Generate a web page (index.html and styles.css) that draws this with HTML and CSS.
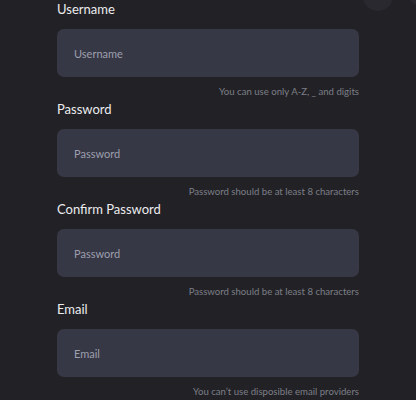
FILE: index.html
```html
<!DOCTYPE html>
<html lang="en">
<head>
<meta charset="utf-8">
<title>Sign up</title>
<link rel="stylesheet" href="styles.css">
</head>
<body>
<div class="decor" aria-hidden="true">
  <div class="deco deco-a"></div>
  <div class="deco deco-b"></div>
</div>
<form class="form">
  <div class="field">
    <label class="label">Username</label>
    <input class="input" type="text" placeholder="Username">
    <div class="hint">You can use only A-Z, _ and digits</div>
  </div>
  <div class="field">
    <label class="label">Password</label>
    <input class="input" type="password" placeholder="Password">
    <div class="hint">Password should be at least 8 characters</div>
  </div>
  <div class="field">
    <label class="label">Confirm Password</label>
    <input class="input" type="password" placeholder="Password">
    <div class="hint">Password should be at least 8 characters</div>
  </div>
  <div class="field">
    <label class="label">Email</label>
    <input class="input" type="email" placeholder="Email">
    <div class="hint">You can’t use disposible email providers</div>
  </div>
</form>
</body>
</html>
```

FILE: styles.css
```css
html, body {
  margin: 0;
  padding: 0;
  background: #222226;
  height: 100%;
  overflow: hidden;
}
body {
  font-family: Lato, "Noto Sans", sans-serif;
  position: relative;
}
.decor {
  position: absolute;
  inset: 0;
  overflow: hidden;
  pointer-events: none;
}
.deco {
  position: absolute;
  border-radius: 50%;
  background: #29292f;
}
.deco-a {
  width: 30px;
  height: 30px;
  left: 363px;
  top: -19px;
}
.deco-b {
  width: 30px;
  height: 30px;
  left: 408px;
  top: -23px;
}
.form {
  position: relative;
  display: flex;
  flex-direction: column;
  width: 302px;
  margin-left: 57px;
}
.field {
  display: flex;
  flex-direction: column;
  margin-bottom: 2px;
}
.label {
  font-size: 13px;
  line-height: 18px;
  color: #ececee;
  margin-bottom: 11px;
}
.input {
  box-sizing: border-box;
  height: 48px;
  width: 100%;
  border: none;
  outline: none;
  border-radius: 7px;
  background: #373845;
  padding: 0 17px;
  font-family: inherit;
  font-size: 11px;
  color: #d0d1da;
}
.input::placeholder {
  color: #9d9fae;
}
.hint {
  margin-top: 9px;
  font-size: 9.6px;
  line-height: 12px;
  color: #7d7e86;
  text-align: right;
}
```
